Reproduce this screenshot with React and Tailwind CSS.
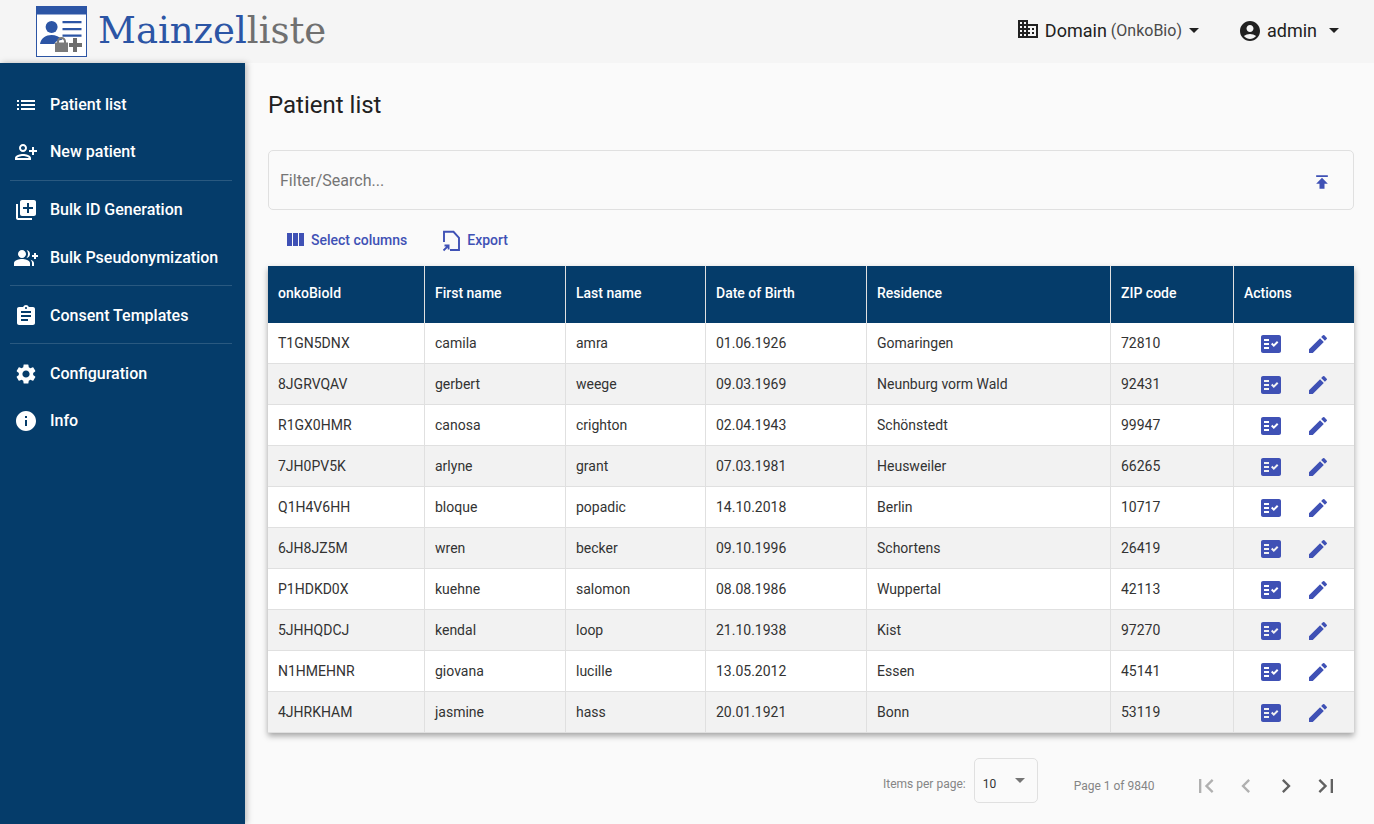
import {
  MdList,
  MdPersonAddAlt,
  MdLibraryAdd,
  MdGroupAdd,
  MdAssignment,
  MdSettings,
  MdInfo,
  MdDomain,
  MdAccountCircle,
  MdPublish,
  MdFactCheck,
  MdEdit,
  MdFirstPage,
  MdLastPage,
  MdChevronLeft,
  MdChevronRight,
} from "react-icons/md";

const rows = [
  ["T1GN5DNX", "camila", "amra", "01.06.1926", "Gomaringen", "72810"],
  ["8JGRVQAV", "gerbert", "weege", "09.03.1969", "Neunburg vorm Wald", "92431"],
  ["R1GX0HMR", "canosa", "crighton", "02.04.1943", "Schönstedt", "99947"],
  ["7JH0PV5K", "arlyne", "grant", "07.03.1981", "Heusweiler", "66265"],
  ["Q1H4V6HH", "bloque", "popadic", "14.10.2018", "Berlin", "10717"],
  ["6JH8JZ5M", "wren", "becker", "09.10.1996", "Schortens", "26419"],
  ["P1HDKD0X", "kuehne", "salomon", "08.08.1986", "Wuppertal", "42113"],
  ["5JHHQDCJ", "kendal", "loop", "21.10.1938", "Kist", "97270"],
  ["N1HMEHNR", "giovana", "lucille", "13.05.2012", "Essen", "45141"],
  ["4JHRKHAM", "jasmine", "hass", "20.01.1921", "Bonn", "53119"],
];

const columns = [
  ["onkoBioId", "w-[157px]"],
  ["First name", "w-[141px]"],
  ["Last name", "w-[140px]"],
  ["Date of Birth", "w-[161px]"],
  ["Residence", "w-[244px]"],
  ["ZIP code", "w-[123px]"],
  ["Actions", ""],
];

function Logo() {
  return (
    <svg width="52" height="52" viewBox="0 0 52 52" className="shrink-0">
      <rect x="0.5" y="0.5" width="50" height="50" fill="#fff" stroke="#2c55a5" />
      <rect x="0.5" y="0.5" width="50" height="8" fill="#2c55a5" />
      <circle cx="15.6" cy="21" r="6" fill="#2c55a5" />
      <path d="M4 38c1-6 6-9 11.500-9 4 0 8 1.500 11 5-4 0-7 1-8 4z" fill="#2c55a5" />
      <path d="M26.500 15h19v2.200h-19zM26.500 22h19v2.200h-19zM26.500 28.500h19v2.200h-19z" fill="#2c55a5" />
      <path d="M19 36.500h13V46H19z" fill="#7a7a7a" />
      <path d="M22 37v-1.500a3.500 3.500 0 0 1 7 0V37" fill="none" stroke="#7a7a7a" strokeWidth="2" />
      <path d="M37 32h4v5h5v4h-5v5h-4v-5h-4v-4h4z" fill="#6e6e6e" />
    </svg>
  );
}

function NavItem({ icon: Icon, label, lower }) {
  return (
    <div className={`flex h-[47px] items-center pl-[14px] ${lower ? "pt-[2px]" : ""}`}>
      <span className="flex w-[24px] justify-center">
        <Icon size={24} className="text-white" />
      </span>
      <span className="ml-[12px] text-[16px] font-medium text-white">{label}</span>
    </div>
  );
}

function Divider() {
  return <div className="ml-[10px] mr-[13px] my-[5px] h-px bg-white/15" />;
}

function ColumnsIcon() {
  return (
    <svg width="24" height="24" viewBox="0 0 24 24" fill="#3f51b5" className="ml-[15px] shrink-0">
      <path d="M10 18h5V5h-5v13zm-6 0h5V5H4v13zM16 5v13h5V5h-5z" />
    </svg>
  );
}

function ExportIcon() {
  return (
    <svg width="24" height="24" viewBox="0 0 24 24" fill="none" className="ml-[33px] shrink-0 overflow-visible">
      <path d="M4 14V3.800h9.500l5.500 6V22h-9" stroke="#3f51b5" strokeWidth="1.900" />
      <path d="M3.500 22.500 8 18M4.500 17.500H8.600V21.500" stroke="#3f51b5" strokeWidth="1.800" />
    </svg>
  );
}

export default function App() {
  return (
    <div className="flex h-[824px] w-[1374px] flex-col overflow-hidden bg-[#fafafa] font-['Roboto',sans-serif] text-[#212121]">
      <header className="flex h-[63px] shrink-0 items-center bg-[#f5f5f5] pl-[36px]">
        <Logo />
        <span className="mb-[2px] ml-[10px] font-['DejaVu_Serif',serif] text-[37px] leading-none text-[#2c55a5]">
          Mainzel<span className="text-[#707070]">liste</span>
        </span>
        <div className="mb-[2px] ml-auto flex items-center text-[18px]">
          <MdDomain size={24} className="mr-[5px] mt-[-4px] text-[#212121]" />
          <span>Domain</span>
          <span className="ml-[4px] text-[16px] text-[#4a4a4a]">(OnkoBio)</span>
          <span className="ml-[7px] h-0 w-0 border-x-[5px] border-t-[5px] border-x-transparent border-t-[#212121]" />
          <MdAccountCircle size={24} className="ml-[39px] text-[#212121]" />
          <span className="ml-[5px]">admin</span>
          <span className="ml-[12px] mr-[35px] h-0 w-0 border-x-[5px] border-t-[5px] border-x-transparent border-t-[#212121]" />
        </div>
      </header>

      <div className="flex min-h-0 flex-1">
        <aside className="z-10 w-[245px] shrink-0 bg-[#053c6a] pt-[18px] shadow-[2px_0_6px_rgba(0,0,0,0.25)]">
          <NavItem icon={MdList} label="Patient list" />
          <NavItem icon={MdPersonAddAlt} label="New patient" />
          <Divider />
          <NavItem icon={MdLibraryAdd} label="Bulk ID Generation" />
          <NavItem icon={MdGroupAdd} label="Bulk Pseudonymization" lower />
          <Divider />
          <NavItem icon={MdAssignment} label="Consent Templates" lower />
          <Divider />
          <NavItem icon={MdSettings} label="Configuration" lower />
          <NavItem icon={MdInfo} label="Info" lower />
        </aside>

        <main className="min-w-0 flex-1 pl-[23px] pr-[20px]">
          <h1 className="mt-[27px] text-[24px] font-normal leading-[30px]">Patient list</h1>

          <div className="mt-[30px] flex h-[60px] items-center justify-between rounded-[5px] border border-[#e0e0e0] pl-[11px] pr-[21px]">
            <span className="mt-[2px] text-[16px] text-[#757575]">Filter/Search...</span>
            <MdPublish size={20} className="mt-[4px] text-[#3f51b5]" />
          </div>

          <div className="flex h-[56px] items-center pt-[4px] text-[14px] font-medium text-[#3f51b5]">
            <ColumnsIcon />
            <span className="ml-[4px]">Select columns</span>
            <ExportIcon />
            <span className="ml-[3px]">Export</span>
          </div>

          <table className="w-[1086px] table-fixed border-separate border-spacing-0 bg-white text-[14px] shadow-[0_3px_6px_rgba(0,0,0,0.35)]">
            <thead>
              <tr className="h-[57px] bg-[#053c6a] text-left text-white">
                {columns.map(([name, width], i) => (
                  <th
                    key={name}
                    className={`${width} px-[10px] pb-[2px] font-medium ${i < 6 ? "border-r border-[#e0e0e0]" : ""}`}
                  >
                    {name}
                  </th>
                ))}
              </tr>
            </thead>
            <tbody>
              {rows.map((row, i) => (
                <tr key={row[0]} className={`h-[41px] ${i % 2 ? "bg-[#f2f2f2]" : "bg-white"}`}>
                  {row.map((cell, j) => (
                    <td key={j} className="border-b border-r border-[#e0e0e0] px-[10px] text-[#333]">
                      {cell}
                    </td>
                  ))}
                  <td className="border-b border-[#e0e0e0]">
                    <div className="flex items-center pl-[25px] pt-[2px]">
                      <MdFactCheck size={24} className="text-[#3f51b5]" />
                      <MdEdit size={24} className="ml-[23px] text-[#3f51b5]" />
                    </div>
                  </td>
                </tr>
              ))}
            </tbody>
          </table>

          <div className="mt-[25px] flex items-center text-[12px] text-[#858585]">
            <span className="ml-[615px] mt-[7px]">Items per page:</span>
            <div className="ml-[8px] flex h-[45px] w-[64px] items-center justify-between rounded-[5px] border border-[#e0e0e0] pl-[8px] pr-[12px] text-[#333]">
              <span className="mt-[7px]">10</span>
              <span className="mt-[-1px] h-0 w-0 border-x-[5px] border-t-[5px] border-x-transparent border-t-[#757575]" />
            </div>
            <span className="ml-[36px] mt-[10px]">Page 1 of 9840</span>
            <div className="ml-[38px] mt-[10px] flex items-center gap-[12px]">
              <MdFirstPage size={28} className="text-[#b0b0b0]" />
              <MdChevronLeft size={28} className="text-[#b0b0b0]" />
              <MdChevronRight size={28} className="text-[#616161]" />
              <MdLastPage size={28} className="text-[#616161]" />
            </div>
          </div>
        </main>
      </div>
    </div>
  );
}
